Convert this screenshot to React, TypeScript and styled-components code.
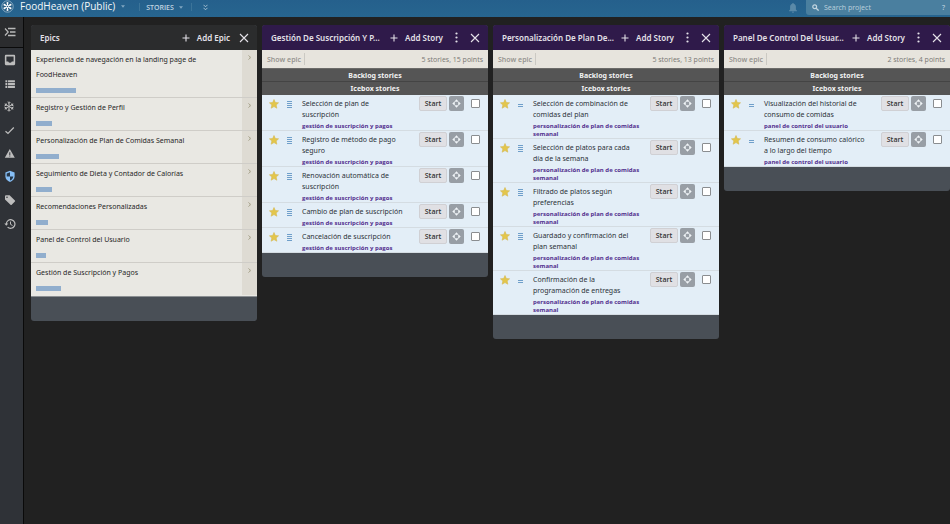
import React from 'react';
import styled, { createGlobalStyle, css } from 'styled-components';

const GlobalStyle = createGlobalStyle`
  *, *::before, *::after { box-sizing: border-box; }
  html, body { margin: 0; background: #212121; }
  body { font-family: "Noto Sans", "Open Sans", sans-serif; font-size: 7px; line-height: 11px; color: #262626; }
  button, input { font: inherit; color: inherit; margin: 0; padding: 0; border: 0; background: none; }
  button { cursor: pointer; }
  svg { display: block; flex: none; }
`;

const compactFont = css`
  font-family: "Open Sans", "Noto Sans", sans-serif;
`;

const Page = styled.div`
  min-height: 100vh;
  display: flex;
  flex-direction: column;
`;

const TopBar = styled.header`
  display: flex;
  align-items: flex-start;
  height: 17px;
  background: linear-gradient(#25608c, #27658f);
  color: #fff;
`;

const ProjectButton = styled.button`
  ${compactFont}
  display: flex;
  align-items: center;
  gap: 6px;
  height: 13px;
  padding-left: 1px;
  font-size: 10px;
  font-weight: 500;
  color: #f4f8fa;
  white-space: nowrap;
`;

const StoriesMenu = styled.nav`
  display: flex;
  align-items: center;
  height: 14px;
  margin-left: 14px;
  color: #c0d3e0;
`;

const NavButton = styled.button`
  ${compactFont}
  display: flex;
  align-items: center;
  gap: 5px;
  padding: 0 8px 0 6px;
  border-left: 1px solid #3c7499;
  border-right: 1px solid #3c7499;
  height: 8px;
  font-size: 7px;
  font-weight: 600;
`;

const ExpandButton = styled.button`
  padding: 0 11px;
`;

const TopRight = styled.div`
  display: flex;
  margin-left: auto;
  gap: 9px;
  align-items: center;
`;

const SearchBox = styled.label`
  display: flex;
  align-items: center;
  gap: 5px;
  width: 144px;
  height: 15px;
  padding: 0 5px 0 6px;
  border-radius: 0 0 0 3px;
  background: #4a7f9f;
  color: #c3d6e1;
`;

const SearchInput = styled.input`
  flex: 1;
  min-width: 0;
  outline: none;
  &::placeholder { color: #b7cedb; opacity: 1; }
`;

const Body = styled.div`
  flex: 1;
  display: flex;
`;

const Sidebar = styled.nav`
  width: 24px;
  flex: none;
  border-right: 1px solid #0a0a0a;
  background: #2f3237;
`;

const SideToggle = styled.button`
  display: flex;
  align-items: center;
  width: 100%;
  height: 31px;
  padding-left: 4px;
  border-bottom: 1px solid #0a0a0a;
  background: #2b2c2e;
  color: #b9b9b9;
`;

const SideList = styled.div`
  display: flex;
  flex-direction: column;
`;

const SideButton = styled.button<{ $active?: boolean }>`
  display: flex;
  align-items: center;
  height: 23px;
  padding-left: 4px;
  color: ${p => (p.$active ? '#86bef5' : '#bdbdbd')};
  &:nth-child(3n + 1) { height: 24px; }
`;

const Board = styled.main`
  flex: 1;
  min-width: 0;
  display: grid;
  grid-template-columns: repeat(4, minmax(0, 1fr));
  gap: 5px;
  align-items: start;
  padding: 8px 0 8px 7px;
`;

const Panel = styled.section`
  border-radius: 3px;
  overflow: hidden;
  background: #494f56;
  padding-bottom: 24px;
`;

const PanelHeader = styled.header<{ $epic?: boolean }>`
  display: flex;
  align-items: center;
  height: 25px;
  padding: 0 8px 0 9px;
  background: ${p => (p.$epic ? '#2b2c2d' : '#2f1a4a')};
  color: #e4e1e8;
  font-size: 8px;
  font-weight: 600;
`;

const PanelTitle = styled.h2`
  flex: 1;
  min-width: 0;
  margin: 0;
  font: inherit;
  white-space: nowrap;
`;

const AddButton = styled.button`
  display: flex;
  align-items: center;
  gap: 7px;
  white-space: nowrap;
`;

const MoreButton = styled.button`
  margin-left: 12px;
  & + button { margin-left: 12px; }
`;

const CloseButton = styled.button`
  margin-left: 9px;
`;

const EpicList = styled.ul`
  list-style: none;
  margin: 0;
  padding: 0;
  border-bottom: 1px solid #8b8f92;
`;

const EpicRow = styled.li`
  display: flex;
  border-bottom: 1px solid #cfcdc8;
  background: #e9e8e3;
  &:last-child { border-color: #e9e8e3; }
`;

const EpicMain = styled.div`
  flex: 1;
  padding: 2px 30px 4px 5px;
  line-height: 15px;
`;

const EpicBar = styled.div`
  height: 5px;
  margin-top: 6px;
  background: #91aecd;
`;

const EpicOpen = styled.button`
  display: flex;
  justify-content: center;
  width: 15px;
  padding-top: 5px;
  background: #dedbd3;
  color: #9a9579;
`;

const Summary = styled.div`
  ${compactFont}
  display: flex;
  align-items: center;
  justify-content: space-between;
  height: 19px;
  padding: 0 5px;
  border-bottom: 1px solid #6c6b69;
  background: #e7e4dd;
  color: #797773;
`;

const ShowEpic = styled.button`
  height: 12px;
  padding-right: 3px;
  border-right: 1px solid #cbc9c3;
  color: #92908c;
  font-weight: 600;
`;

const GroupTitle = styled.h3`
  margin: 0;
  height: 13px;
  border-bottom: 1px solid #444;
  background: #555;
  color: #f2f2f2;
  font-size: 7px;
  font-weight: 700;
  line-height: 14px;
  text-align: center;
  & + & { border-color: #555; }
`;

const StoryList = styled.ul`
  list-style: none;
  margin: 0;
  padding: 0;
`;

const StoryRow = styled.li`
  display: flex;
  align-items: flex-start;
  padding: 1px 8px 0 7px;
  border-bottom: 1px solid #d4dce2;
  background: #e3eef7;
`;

const StoryIcons = styled.div`
  display: flex;
  align-items: center;
  justify-content: space-between;
  flex: none;
  width: 23px;
  height: 15px;
  margin-right: 10px;
`;

const StoryText = styled.div`
  flex: 1;
  min-width: 0;
  padding-top: 2px;
  color: #2c3238;
`;

const StoryLine = styled.div`
  white-space: nowrap;
`;

const StoryTag = styled.a`
  ${compactFont}
  display: block;
  margin-top: 2px;
  color: #53308f;
  font-size: 6px;
  font-weight: 700;
  line-height: 8px;
  text-decoration: none;
`;

const StoryActions = styled.div`
  display: flex;
  align-items: center;
  flex: none;
  height: 15px;
`;

const smallButton = css`
  height: 15px;
  border-radius: 2px;
`;

const StartButton = styled.button`
  ${smallButton}
  ${compactFont}
  width: 28px;
  border: 1px solid #d0d0d4;
  background: #e0e0e4;
  color: #333;
  font-size: 7px;
  font-weight: 600;
`;

const TargetButton = styled.button`
  ${smallButton}
  display: grid;
  place-items: center;
  width: 15px;
  margin: 0 7px 0 2px;
  background: #989ea5;
  color: #f0f4f7;
`;

const Check = styled.input`
  appearance: none;
  width: 9px;
  height: 9px;
  border: 1px solid #8a8d90;
  border-radius: 1px;
  background: #fff;
`;

const stroke = { fill: 'none', stroke: 'currentColor' };

const Plus = () => (
  <svg width="8" height="8" viewBox="0 0 8 8" {...stroke}><path d="M4 .5v7M.5 4h7" strokeWidth="1.1" /></svg>
);
const Cross = () => (
  <svg width="10" height="10" viewBox="0 0 10 10" {...stroke}><path d="M1 1l8 8M9 1L1 9" strokeWidth="1.1" /></svg>
);
const Dots = () => (
  <svg width="3" height="11" viewBox="0 0 3 11" fill="currentColor">
    <circle cx="1.5" cy="1.5" r="1.1" /><circle cx="1.5" cy="5.5" r="1.1" /><circle cx="1.5" cy="9.5" r="1.1" />
  </svg>
);
const Caret = () => (
  <svg width="4" height="3" viewBox="0 0 4 3" fill="#7fa6c0"><path d="M0 .3h4L2 2.7z" /></svg>
);
const Logo = () => (
  <svg width="13" height="13" viewBox="0 0 13 13">
    <circle cx="6.5" cy="6.5" r="5.7" fill="#2a5f86" stroke="#8fb2ca" strokeWidth=".9" />
    <path d="M6.5 6.5V3M6.5 6.5V10M6.5 6.5l3-1.8M6.5 6.5l-3 1.8M6.5 6.5l-3-1.8M6.5 6.5l3 1.8" stroke="#fff" strokeWidth="1.1" />
    <g fill="#fff">
      <circle cx="6.5" cy="3" r="1" /><circle cx="6.5" cy="10" r="1" /><circle cx="9.5" cy="4.7" r="1" />
      <circle cx="3.5" cy="8.3" r="1" /><circle cx="3.5" cy="4.7" r="1" /><circle cx="9.5" cy="8.3" r="1" />
    </g>
    <circle cx="6.5" cy="6.5" r=".7" fill="#2a5f86" />
  </svg>
);
const DoubleChevron = () => (
  <svg width="5" height="7" viewBox="0 0 5 7" {...stroke}><path d="M.5 .8l2 2 2-2M.5 3.8l2 2 2-2" strokeWidth=".8" /></svg>
);
const Bell = () => (
  <svg width="8" height="10" viewBox="0 0 8 10" fill="#5a89a8">
    <path d="M4 0c.5 0 .8.3.8.8C6.2 1.2 6.9 2.4 6.9 4v2.5L8 7.7v.5H0v-.5l1.100-1.200V4c0-1.600.7-2.800 2.100-3.200C3.200.3 3.500 0 4 0zM3 8.700h2c0 .6-.4 1-1 1s-1-.4-1-1z" />
  </svg>
);
const SearchIcon = () => (
  <svg width="7" height="7" viewBox="0 0 7 7" {...stroke}><circle cx="2.7" cy="2.7" r="1.9" strokeWidth="1.2" /><path d="M4.2 4.2L6.6 6.6" strokeWidth="1.3" /></svg>
);
const ChevronRight = () => (
  <svg width="3" height="5" viewBox="0 0 3 5" {...stroke}><path d="M.5 .4C1.6 1.3 2.2 1.9 2.2 2.5S1.6 3.7.5 4.6" strokeWidth="1" /></svg>
);
const ToggleIcon = () => (
  <svg width="12" height="10" viewBox="0 0 12 10" {...stroke}>
    <path d="M1 1.5l3.200 3.500L1 8.500" strokeWidth="1.2" /><path d="M4 1.5h7.500M6 5h5.500M4 8.500h7.500" strokeWidth="1.4" />
  </svg>
);
const InboxIcon = () => (
  <svg width="12" height="12" viewBox="0 0 11 11" fill="currentColor" fillRule="evenodd">
    <path d="M1.8 .8h7.400q1 0 1 1v7.400q0 1-1 1H1.800q-1 0-1-1V1.800q0-1 1-1zM2.200 2.200v4.600h1.600q.5 1.300 1.700 1.300T7.200 6.800H8.800V2.200z" />
  </svg>
);
const ListIcon = () => (
  <svg width="12" height="12" viewBox="0 0 11 11" fill="currentColor">
    <path d="M1.300 2h1.700v1.900H1.300zM1.300 4.600h1.700v1.900H1.300zM1.300 7.200h1.700v1.900H1.300zM3.700 2h6.300v1.900H3.700zM3.700 4.600h6.300v1.900H3.700zM3.700 7.200h6.300v1.900H3.700z" />
  </svg>
);
const SnowIcon = () => (
  <svg width="11" height="11" viewBox="0 0 11 11" {...stroke}>
    <path d="M5 .5v10M.7 3l8.600 5M9.300 3L.7 8M3.600 1l1.400 1.400L6.400 1M3.600 10L5 8.600 6.400 10M.5 4.800l1.900-.6-.4-1.900M8 8.700l-.4-1.900 1.900-.6M8 2.300l-.4 1.900 1.900.6M.5 6.200l1.900.6L2 8.700" strokeWidth="1" />
  </svg>
);
const CheckIcon = () => (
  <svg width="11" height="11" viewBox="0 0 11 11" {...stroke}><path d="M1.500 6.200l2.500 2.300L9.800 2.500" strokeWidth="1.2" /></svg>
);
const WarnIcon = () => (
  <svg width="11" height="11" viewBox="0 0 11 11" fill="currentColor" fillRule="evenodd">
    <path d="M5.800 1L10.800 9.700H.8zM5.300 4.300v2.600h1V4.300zM5.300 7.500v1h1v-1z" />
  </svg>
);
const ShieldIcon = () => (
  <svg width="12" height="13" viewBox="0 0 12 13">
    <path d="M6 .8l4.600 1.700v3.700c0 2.700-1.900 4.800-4.600 5.800-2.700-1-4.600-3.100-4.600-5.800V2.500z" fill="currentColor" />
    <path d="M6 2.200v4.200H2.700V3.400zM6 6.400h3.300c-.3 1.900-1.500 3.300-3.300 4.200z" fill="#26384b" />
  </svg>
);
const TagIcon = () => (
  <svg width="12" height="12" viewBox="0 0 12 12" fill="currentColor" fillRule="evenodd">
    <path d="M1 2.200Q1 1.200 2 1.200h3.600l5.300 5.200q.6.600 0 1.200L7.700 10.800q-.6.600-1.200 0L1 5.400zM3 2.400a.8.8 0 100 1.600.8.800 0 000-1.600z" />
  </svg>
);
const HistoryIcon = () => (
  <svg width="12" height="12" viewBox="0 0 12 12" {...stroke}>
    <path d="M2.300 6a4.300 4.300 0 111.300 3.100" strokeWidth="1.2" /><path d="M6.500 3.500v2.800l2 1.200" strokeWidth="1" />
    <path d="M.3 5.500h4L2.300 7.800z" fill="currentColor" stroke="none" />
  </svg>
);
const Star = () => (
  <svg width="10" height="10" viewBox="0 0 10 10">
    <path d="M5 .5l1.350 3 3.200.35-2.400 2.150.7 3.200L5 7.600 2.150 9.200l.7-3.200L.45 3.850l3.200-.35z" fill="#e3c64c" stroke="#d5b950" strokeWidth=".6" />
  </svg>
);
const Estimate = ({ points }: { points: number }) => (
  <svg width="5" height="9" viewBox="0 0 5 9" fill="#6f9fca">
    {points > 2
      ? <path d="M0 2h5v1H0zM0 4h5v1H0zM0 6h5v1H0zM0 8h5v1H0z" />
      : <path d="M0 5h5v1H0zM0 7h5v1H0z" />}
  </svg>
);
const Target = () => (
  <svg width="9" height="9" viewBox="0 0 9 9" fill="currentColor">
    <path d="M4.500 .3l2.200 2.500H2.300zM4.500 8.700l2.200-2.500H2.300zM.3 4.500l2.500-2.200v4.400zM8.700 4.500L6.200 2.300v4.400z" />
  </svg>
);

const epics = [
  { name: 'Experiencia de navegación en la landing page de FoodHeaven', width: 40 },
  { name: 'Registro y Gestión de Perfil', width: 16 },
  { name: 'Personalización de Plan de Comidas Semanal', width: 23 },
  { name: 'Seguimiento de Dieta y Contador de Calorías', width: 16 },
  { name: 'Recomendaciones Personalizadas', width: 12 },
  { name: 'Panel de Control del Usuario', width: 10 },
  { name: 'Gestión de Suscripción y Pagos', width: 25 },
];

type Story = { lines: string[]; points: number };
type StoryColumn = { title: string; summary: string; tag: string[]; stories: Story[] };

const columns: StoryColumn[] = [
  {
    title: 'Gestión De Suscripción Y P...',
    summary: '5 stories, 15 points',
    tag: ['gestión de suscripción y pagos'],
    stories: [
      { lines: ['Selección de plan de', 'suscripción'], points: 3 },
      { lines: ['Registro de método de pago', 'seguro'], points: 3 },
      { lines: ['Renovación automática de', 'suscripción'], points: 3 },
      { lines: ['Cambio de plan de suscripción'], points: 3 },
      { lines: ['Cancelación de suscripción'], points: 3 },
    ],
  },
  {
    title: 'Personalización De Plan De...',
    summary: '5 stories, 13 points',
    tag: ['personalización de plan de comidas', 'semanal'],
    stories: [
      { lines: ['Selección de combinación de', 'comidas del plan'], points: 2 },
      { lines: ['Selección de platos para cada', 'día de la semana'], points: 3 },
      { lines: ['Filtrado de platos según', 'preferencias'], points: 3 },
      { lines: ['Guardado y confirmación del', 'plan semanal'], points: 3 },
      { lines: ['Confirmación de la', 'programación de entregas'], points: 2 },
    ],
  },
  {
    title: 'Panel De Control Del Usuar...',
    summary: '2 stories, 4 points',
    tag: ['panel de control del usuario'],
    stories: [
      { lines: ['Visualización del historial de', 'consumo de comidas'], points: 2 },
      { lines: ['Resumen de consumo calórico', 'a lo largo del tiempo'], points: 2 },
    ],
  },
];

const sideItems = [
  { label: 'My work', icon: <InboxIcon /> },
  { label: 'Backlog', icon: <ListIcon /> },
  { label: 'Icebox', icon: <SnowIcon /> },
  { label: 'Done', icon: <CheckIcon /> },
  { label: 'Blockers', icon: <WarnIcon /> },
  { label: 'Epics', icon: <ShieldIcon />, active: true },
  { label: 'Labels', icon: <TagIcon /> },
  { label: 'Project history', icon: <HistoryIcon /> },
];

const StoryPanel = ({ column }: { column: StoryColumn }) => (
  <Panel>
    <PanelHeader>
      <PanelTitle>{column.title}</PanelTitle>
      <AddButton><Plus />Add Story</AddButton>
      <MoreButton aria-label="More"><Dots /></MoreButton>
      <CloseButton aria-label="Close"><Cross /></CloseButton>
    </PanelHeader>
    <Summary>
      <ShowEpic>Show epic</ShowEpic>
      <span>{column.summary}</span>
    </Summary>
    <GroupTitle>Backlog stories</GroupTitle>
    <GroupTitle>Icebox stories</GroupTitle>
    <StoryList>
      {column.stories.map(story => (
        <StoryRow key={story.lines[0]}>
          <StoryIcons><Star /><Estimate points={story.points} /></StoryIcons>
          <StoryText>
            {story.lines.map(line => <StoryLine key={line}>{line}</StoryLine>)}
            <StoryTag href="#">{column.tag.map(t => <StoryLine key={t}>{t}</StoryLine>)}</StoryTag>
          </StoryText>
          <StoryActions>
            <StartButton>Start</StartButton>
            <TargetButton aria-label="Reveal story"><Target /></TargetButton>
            <Check type="checkbox" aria-label={story.lines.join(' ')} />
          </StoryActions>
        </StoryRow>
      ))}
    </StoryList>
  </Panel>
);

export default function App() {
  return (
    <Page>
      <GlobalStyle />
      <TopBar>
        <ProjectButton><Logo />FoodHeaven (Public)<Caret /></ProjectButton>
        <StoriesMenu>
          <NavButton>STORIES<Caret /></NavButton>
          <ExpandButton aria-label="Expand header"><DoubleChevron /></ExpandButton>
        </StoriesMenu>
        <TopRight>
          <Bell />
          <SearchBox>
            <SearchIcon />
            <SearchInput type="text" aria-label="Search project" placeholder="Search project" />
            <span>?</span>
          </SearchBox>
        </TopRight>
      </TopBar>
      <Body>
        <Sidebar>
          <SideToggle aria-label="Toggle sidebar"><ToggleIcon /></SideToggle>
          <SideList>
            {sideItems.map(item => (
              <SideButton key={item.label} aria-label={item.label} $active={item.active}>{item.icon}</SideButton>
            ))}
          </SideList>
        </Sidebar>
        <Board>
          <Panel>
            <PanelHeader $epic>
              <PanelTitle>Epics</PanelTitle>
              <AddButton><Plus />Add Epic</AddButton>
              <CloseButton aria-label="Close"><Cross /></CloseButton>
            </PanelHeader>
            <EpicList>
              {epics.map(epic => (
                <EpicRow key={epic.name}>
                  <EpicMain>
                    {epic.name}
                    <EpicBar style={{ width: epic.width }} />
                  </EpicMain>
                  <EpicOpen aria-label={`Open ${epic.name}`}><ChevronRight /></EpicOpen>
                </EpicRow>
              ))}
            </EpicList>
          </Panel>
          {columns.map(column => <StoryPanel key={column.title} column={column} />)}
        </Board>
      </Body>
    </Page>
  );
}
